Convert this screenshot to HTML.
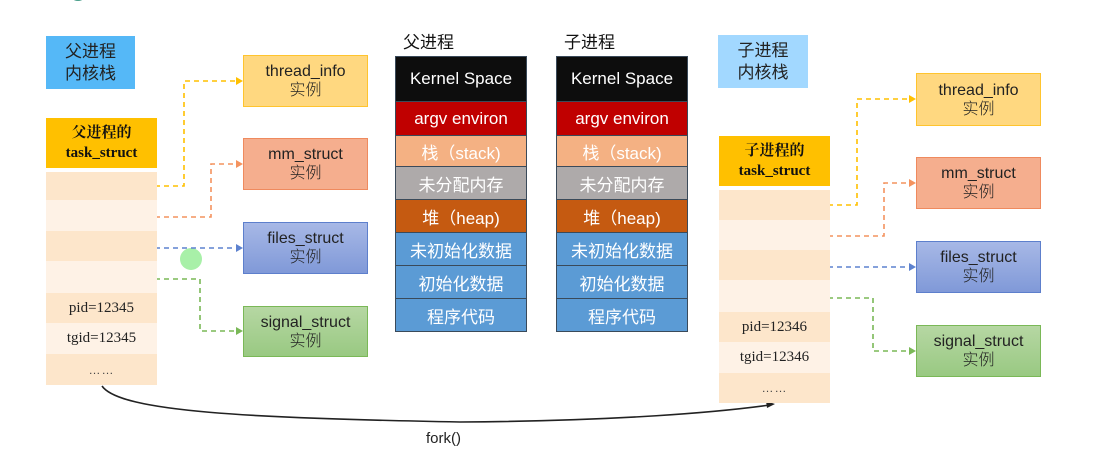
<!DOCTYPE html>
<html><head><meta charset="utf-8"><style>
body{margin:0;width:1117px;height:459px;background:#fff;position:relative;overflow:hidden;font-family:"Liberation Sans","Noto Sans CJK SC",sans-serif}
.a{position:absolute;box-sizing:border-box;text-align:center;display:flex;flex-direction:column;justify-content:center;align-items:center}
.st{font-size:16px;color:#222;line-height:19px;font-weight:300}
.col div{height:33px}
.hd{background:#ffc000;font-family:"Liberation Serif","Noto Serif CJK SC",serif;font-weight:bold;font-size:15px;line-height:20px;color:#111}
.r{font-family:"Liberation Serif","Noto Serif CJK SC",serif;font-size:15px;color:#222}
.d{background:#fde6cb}.l{background:#fef2e6}
.seg{font-size:17px;color:#fff;border:1px solid #3a4a5a;border-top:none}
.dots{font-size:12px;color:#444;letter-spacing:1px}
</style></head><body>
<svg width="1117" height="459" style="position:absolute;left:0;top:0">
<circle cx="78" cy="-8" r="9" fill="#4a9e8a"/>
<circle cx="191" cy="259" r="11" fill="#a8f0a8"/>
<g fill="none" stroke-width="1.6" stroke-dasharray="5,4">
<path d="M137 186H184V81H240" stroke="#ffc000"/>
<path d="M137 217H211V164H240" stroke="#f4935f"/>
<path d="M137 248H240" stroke="#5d82cf"/>
<path d="M137 279H200V331H240" stroke="#7ab857"/>
<path d="M810 205H857V99H913" stroke="#ffc000"/>
<path d="M810 236H884V183H913" stroke="#f4935f"/>
<path d="M810 267H913" stroke="#5d82cf"/>
<path d="M810 298H873V351H913" stroke="#7ab857"/>
</g>
<g>
<path d="M243 81l-7-4v8z" fill="#ffc000"/>
<path d="M243 164l-7-4v8z" fill="#f4935f"/>
<path d="M243 248l-7-4v8z" fill="#5d82cf"/>
<path d="M243 331l-7-4v8z" fill="#7ab857"/>
<path d="M916 99l-7-4v8z" fill="#ffc000"/>
<path d="M916 183l-7-4v8z" fill="#f4935f"/>
<path d="M916 267l-7-4v8z" fill="#5d82cf"/>
<path d="M916 351l-7-4v8z" fill="#7ab857"/>
</g>
<path d="M102 386C120 412 250 418 460 422C620 421 720 412 770 405" fill="none" stroke="#222" stroke-width="1.6"/>
<path d="M775 404l-9-3 1 7z" fill="#222"/>
</svg>

<div class="a st" style="left:46px;top:36px;width:89px;height:53px;background:#55b8f7;font-size:17px;line-height:22px;font-weight:normal">父进程<br>内核栈</div>
<div class="a hd" style="left:46px;top:118px;width:111px;height:50px">父进程的<br>task_struct</div>
<div class="a d" style="left:46px;top:172px;width:111px;height:28px"></div>
<div class="a l" style="left:46px;top:200px;width:111px;height:31px"></div>
<div class="a d" style="left:46px;top:231px;width:111px;height:30px"></div>
<div class="a l" style="left:46px;top:261px;width:111px;height:32px"></div>
<div class="a d r" style="left:46px;top:293px;width:111px;height:30px">pid=12345</div>
<div class="a l r" style="left:46px;top:323px;width:111px;height:31px">tgid=12345</div>
<div class="a d dots" style="left:46px;top:354px;width:111px;height:31px">……</div>

<div class="a st" style="left:243px;top:55px;width:125px;height:52px;background:#ffd880;border:1.5px solid #ffc42e">thread_info<br>实例</div>
<div class="a st" style="left:243px;top:138px;width:125px;height:52px;background:#f5ae8e;border:1.5px solid #ef8a5e">mm_struct<br>实例</div>
<div class="a st" style="left:243px;top:222px;width:125px;height:52px;background:linear-gradient(#a7b8e6,#8099d8);border:1.5px solid #5d7fcc">files_struct<br>实例</div>
<div class="a st" style="left:243px;top:306px;width:125px;height:51px;background:linear-gradient(#b6d7a3,#99c982);border:1.5px solid #7ab857">signal_struct<br>实例</div>

<div class="a" style="left:403px;top:28px;font-size:17px;color:#111">父进程</div>
<div class="a" style="left:564px;top:28px;font-size:17px;color:#111">子进程</div>

<div style="position:absolute;left:395px;top:56px;width:132px" class="col">
<div class="a seg" style="position:static;height:46px;background:#0d0d0d;border-top:1px solid #3a4a5a">Kernel Space</div>
<div class="a seg" style="position:static;height:34px;background:#c00000">argv environ</div>
<div class="a seg" style="position:static;height:31px;background:#f4b183">栈（stack)</div>
<div class="a seg" style="position:static;background:#aeaaaa">未分配内存</div>
<div class="a seg" style="position:static;background:#c55a11">堆（heap)</div>
<div class="a seg" style="position:static;background:#5b9bd5">未初始化数据</div>
<div class="a seg" style="position:static;background:#5b9bd5">初始化数据</div>
<div class="a seg" style="position:static;background:#5b9bd5">程序代码</div>
</div>
<div style="position:absolute;left:556px;top:56px;width:132px" class="col">
<div class="a seg" style="position:static;height:46px;background:#0d0d0d;border-top:1px solid #3a4a5a">Kernel Space</div>
<div class="a seg" style="position:static;height:34px;background:#c00000">argv environ</div>
<div class="a seg" style="position:static;height:31px;background:#f4b183">栈（stack)</div>
<div class="a seg" style="position:static;background:#aeaaaa">未分配内存</div>
<div class="a seg" style="position:static;background:#c55a11">堆（heap)</div>
<div class="a seg" style="position:static;background:#5b9bd5">未初始化数据</div>
<div class="a seg" style="position:static;background:#5b9bd5">初始化数据</div>
<div class="a seg" style="position:static;background:#5b9bd5">程序代码</div>
</div>

<div class="a st" style="left:718px;top:35px;width:90px;height:53px;background:#a2d8ff;font-size:17px;line-height:22px;font-weight:normal">子进程<br>内核栈</div>
<div class="a hd" style="left:719px;top:136px;width:111px;height:50px">子进程的<br>task_struct</div>
<div class="a d" style="left:719px;top:190px;width:111px;height:30px"></div>
<div class="a l" style="left:719px;top:220px;width:111px;height:30px"></div>
<div class="a d" style="left:719px;top:250px;width:111px;height:30px"></div>
<div class="a l" style="left:719px;top:280px;width:111px;height:32px"></div>
<div class="a d r" style="left:719px;top:312px;width:111px;height:30px">pid=12346</div>
<div class="a l r" style="left:719px;top:342px;width:111px;height:31px">tgid=12346</div>
<div class="a d dots" style="left:719px;top:373px;width:111px;height:30px">……</div>

<div class="a st" style="left:916px;top:73px;width:125px;height:53px;background:#ffd880;border:1.5px solid #ffc42e">thread_info<br>实例</div>
<div class="a st" style="left:916px;top:157px;width:125px;height:52px;background:#f5ae8e;border:1.5px solid #ef8a5e">mm_struct<br>实例</div>
<div class="a st" style="left:916px;top:241px;width:125px;height:52px;background:linear-gradient(#a7b8e6,#8099d8);border:1.5px solid #5d7fcc">files_struct<br>实例</div>
<div class="a st" style="left:916px;top:325px;width:125px;height:52px;background:linear-gradient(#b6d7a3,#99c982);border:1.5px solid #7ab857">signal_struct<br>实例</div>

<div class="a" style="left:426px;top:430px;font-size:15px;color:#222">fork()</div>
</body></html>
